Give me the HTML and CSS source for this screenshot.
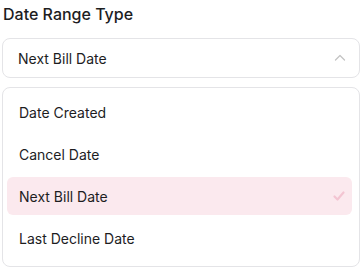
FILE: index.html
```html
<!DOCTYPE html>
<html lang="en">
<head>
    <meta charset="UTF-8">
    <meta name="viewport" content="width=device-width, initial-scale=1.0">
    <title>Date Range Type</title>
    <link rel="stylesheet" href="styles.css">
</head>
<body>
    <div class="field">
        <label class="field-label">Date Range Type</label>
        <div class="select">
            <span class="select-value">Next Bill Date</span>
            <svg class="chevron" width="14" height="14" viewBox="0 0 14 14" fill="none">
                <path d="M2.5 9L7 4.5L11.5 9" stroke="#c4c4c4" stroke-width="1.3" stroke-linecap="round" stroke-linejoin="round"/>
            </svg>
        </div>
        <ul class="menu">
            <li class="option">Date Created</li>
            <li class="option">Cancel Date</li>
            <li class="option selected">
                <span>Next Bill Date</span>
                <svg class="check" width="14" height="14" viewBox="0 0 14 14" fill="none">
                    <path d="M2.5 7.5L5.5 10.5L11.5 3.5" stroke="#f3c5d2" stroke-width="2.2" stroke-linecap="round" stroke-linejoin="round"/>
                </svg>
            </li>
            <li class="option">Last Decline Date</li>
        </ul>
    </div>
</body>
</html>
```

FILE: styles.css
```css
body {
    margin: 0;
    padding: 2px 2px 0 2px;
    font-family: 'Inter', 'Noto Sans', sans-serif;
    color: #1d1d1f;
    background-color: #ffffff;
}
.field {
    width: 358px;
}
.field-label {
    display: block;
    font-size: 16px;
    font-weight: 500;
    line-height: 24px;
    padding-left: 1px;
    margin-bottom: 12px;
}
.select {
    box-sizing: border-box;
    height: 40px;
    display: flex;
    align-items: center;
    justify-content: space-between;
    padding: 0 12px 0 15px;
    border: 1px solid #e4e4e7;
    border-radius: 8px;
    font-size: 14px;
}
.menu {
    box-sizing: border-box;
    list-style: none;
    margin: 9px 0 0 0;
    padding: 5px 7px 9px 4px;
    border: 1px solid #e4e4e7;
    border-radius: 8px;
    display: flex;
    flex-direction: column;
    gap: 4px;
}
.option {
    height: 38px;
    display: flex;
    align-items: center;
    justify-content: space-between;
    padding: 0 6px 0 12px;
    font-size: 14px;
    border-radius: 6px;
}
.option.selected {
    background-color: #fbe9ee;
}
```
